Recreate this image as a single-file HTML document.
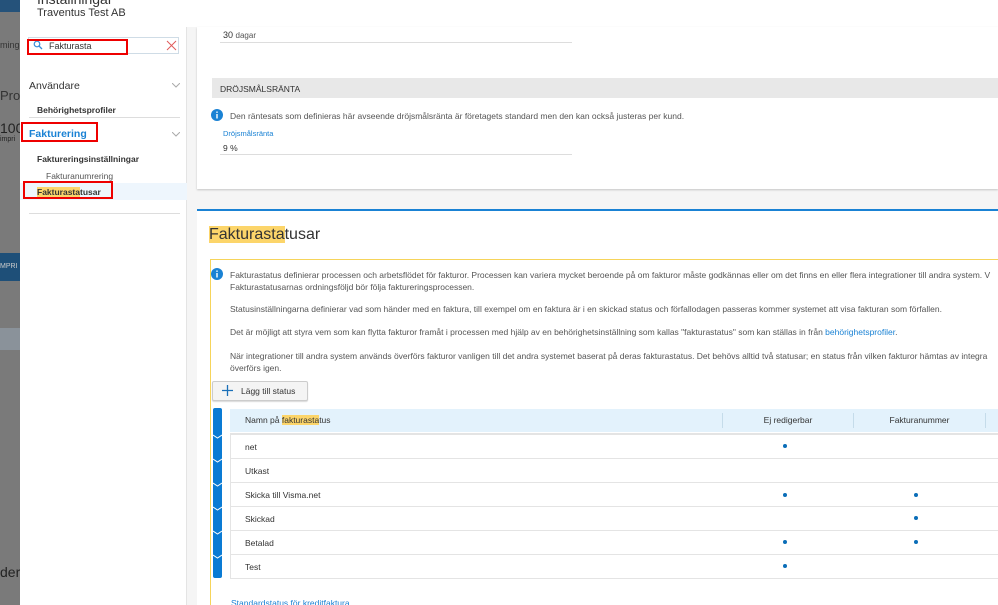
<!DOCTYPE html>
<html><head><meta charset="utf-8"><style>
*{box-sizing:border-box;margin:0;padding:0}
html{width:998px;height:605px;overflow:hidden}
body{width:998px;height:605px;overflow:hidden;position:relative;font-family:"Liberation Sans","DejaVu Sans",sans-serif;background:#f5f5f5;color:#333}
.abs{position:absolute}
.hl{background:#fcd56a}
.t9{font-size:8.5px;color:#555}
</style></head><body>
<div class="abs" style="left:0;top:0;width:21px;height:605px;background:#7a7a7a"></div>
<div class="abs" style="left:0;top:0;width:21px;height:12px;background:#25527a"></div>
<div class="abs" style="left:0;top:40px;font-size:9px;color:#333">minge</div>
<div class="abs" style="left:0;top:88px;font-size:13px;color:#333">Proje</div>
<div class="abs" style="left:0;top:120px;font-size:14px;color:#222">100</div>
<div class="abs" style="left:0;top:136px;font-size:7px;color:#222">impri</div>
<div class="abs" style="left:0;top:253px;width:21px;height:28px;background:#1e4f78;color:#ccc;font-size:7px;padding-top:10px">MPRI</div>
<div class="abs" style="left:0;top:328px;width:21px;height:22px;background:#8a929a"></div>
<div class="abs" style="left:0;top:564px;font-size:14px;color:#222">der</div>
<div class="abs" style="left:20px;top:0;width:978px;height:27px;background:#fff"></div>
<div class="abs" style="left:37px;top:-9px;font-size:14px;color:#333">Inställningar</div>
<div class="abs" style="left:37px;top:7px;font-size:11px;color:#333">Traventus Test AB</div>
<div class="abs" style="left:20px;top:27px;width:167px;height:578px;background:#fff;border-right:1px solid #e4e4e4"></div>
<div class="abs" style="left:28px;top:37px;width:151px;height:17px;border:1px solid #cfdce6"></div>
<svg class="abs" style="left:33px;top:40px" width="10" height="10"><circle cx="4" cy="4" r="2.8" stroke="#3a8ed8" fill="none" stroke-width="1.2"/><line x1="6" y1="6" x2="9" y2="9" stroke="#3a8ed8" stroke-width="1.3"/></svg>
<div class="abs" style="left:49px;top:41px;font-size:9px;color:#333">Fakturasta</div>
<svg class="abs" style="left:166px;top:40px" width="11" height="11"><path d="M1 1L10 10M10 1L1 10" stroke="#e05a5a" stroke-width="1"/></svg>
<div class="abs" style="left:27px;top:39px;width:101px;height:16px;border:2px solid #e00"></div>
<div class="abs" style="left:29px;top:80px;font-size:10.5px;color:#333">Användare</div>
<svg class="abs" style="left:172px;top:83px" width="8" height="5"><path d="M0 0L4 4L8 0" stroke="#aaa" fill="none"/></svg>
<div class="abs" style="left:37px;top:105px;font-size:8.5px;font-weight:bold;color:#333">Behörighetsprofiler</div>
<div class="abs" style="left:29px;top:117px;width:151px;height:1px;background:#ddd"></div>
<div class="abs" style="left:29px;top:128px;font-size:10.5px;font-weight:bold;color:#1a82d4">Fakturering</div>
<div class="abs" style="left:21px;top:122px;width:77px;height:20px;border:2px solid #e00"></div>
<svg class="abs" style="left:172px;top:132px" width="8" height="5"><path d="M0 0L4 4L8 0" stroke="#aaa" fill="none"/></svg>
<div class="abs" style="left:37px;top:154px;font-size:8.5px;font-weight:bold;color:#333">Faktureringsinställningar</div>
<div class="abs" style="left:46px;top:171px;font-size:8.5px;color:#555">Fakturanumrering</div>
<div class="abs" style="left:20px;top:183px;width:167px;height:17px;background:#eef6fd"></div>
<div class="abs" style="left:37px;top:187px;font-size:8.5px;font-weight:bold;color:#333"><span class="hl">Fakturasta</span>tusar</div>
<div class="abs" style="left:23px;top:181px;width:90px;height:18px;border:2px solid #e00"></div>
<div class="abs" style="left:29px;top:213px;width:151px;height:1px;background:#ddd"></div>
<div class="abs" style="left:197px;top:27px;width:801px;height:162px;background:#fff;box-shadow:0 1px 2px rgba(0,0,0,.2)"></div>
<div class="abs" style="left:223px;top:30px;font-size:9px;color:#333">30 <span style="font-size:8px;color:#555">dagar</span></div>
<div class="abs" style="left:220px;top:42px;width:352px;height:1px;background:#ddd"></div>
<div class="abs" style="left:212px;top:78px;width:786px;height:20px;background:#e8e8e8;font-size:8.5px;color:#333;padding:6px 0 0 8px">DRÖJSMÅLSRÄNTA</div>
<svg class="abs" style="left:211px;top:109px" width="12" height="12"><circle cx="6" cy="6" r="6" fill="#1a82d4"/><rect x="5.3" y="5" width="1.4" height="4.5" fill="#fff"/><rect x="5.3" y="2.5" width="1.4" height="1.4" fill="#fff"/></svg>
<div class="abs t9" style="left:230px;top:111px">Den räntesats som definieras här avseende dröjsmålsränta är företagets standard men den kan också justeras per kund.</div>
<div class="abs" style="left:223px;top:129px;font-size:7.5px;color:#1a82d4">Dröjsmålsränta</div>
<div class="abs" style="left:223px;top:143px;font-size:8.5px;color:#333">9 %</div>
<div class="abs" style="left:220px;top:154px;width:352px;height:1px;background:#ddd"></div>
<div class="abs" style="left:197px;top:209px;width:801px;height:396px;background:#fff;border-top:2px solid #1a82d4"></div>
<div class="abs" style="left:209px;top:226px;font-size:16px;color:#333"><span class="hl">Fakturasta</span>tusar</div>
<div class="abs" style="left:210px;top:259px;width:800px;height:360px;border:1px solid #f6d45a"></div>
<svg class="abs" style="left:211px;top:268px" width="12" height="12"><circle cx="6" cy="6" r="6" fill="#1a82d4"/><rect x="5.3" y="5" width="1.4" height="4.5" fill="#fff"/><rect x="5.3" y="2.5" width="1.4" height="1.4" fill="#fff"/></svg>
<div class="abs t9" style="left:230px;top:269px;white-space:nowrap;line-height:12px">Fakturastatus definierar processen och arbetsflödet för fakturor. Processen kan variera mycket beroende på om fakturor måste godkännas eller om det finns en eller flera integrationer till andra system. V<br>Fakturastatusarnas ordningsföljd bör följa faktureringsprocessen.</div>
<div class="abs t9" style="left:230px;top:304px;white-space:nowrap">Statusinställningarna definierar vad som händer med en faktura, till exempel om en faktura är i en skickad status och förfallodagen passeras kommer systemet att visa fakturan som förfallen.</div>
<div class="abs t9" style="left:230px;top:327px;white-space:nowrap">Det är möjligt att styra vem som kan flytta fakturor framåt i processen med hjälp av en behörighetsinställning som kallas "fakturastatus" som kan ställas in från <span style="color:#1a82d4">behörighetsprofiler</span>.</div>
<div class="abs t9" style="left:230px;top:350px;white-space:nowrap;line-height:12px">När integrationer till andra system används överförs fakturor vanligen till det andra systemet baserat på deras fakturastatus. Det behövs alltid två statusar; en status från vilken fakturor hämtas av integra<br>överförs igen.</div>
<div class="abs" style="left:212px;top:381px;width:96px;height:20px;background:#f4f4f4;border:1px solid #ccc;border-radius:2px;box-shadow:0 1px 1px rgba(0,0,0,.15)"></div>
<svg class="abs" style="left:222px;top:385px" width="11" height="11"><path d="M5.5 0V11M0 5.5H11" stroke="#1a6fb8" stroke-width="1.3"/></svg>
<div class="abs" style="left:241px;top:386px;font-size:8.5px;color:#333">Lägg till status</div>
<div class="abs" style="left:213px;top:408px;width:9px;height:170px;background:#0a7bd4;border-radius:2px"></div>
<svg class="abs" style="left:213px;top:430px" width="9" height="130"><g stroke="#fff" fill="none" stroke-width="1"><path d="M0 5L4.5 8L9 5"/><path d="M0 29L4.5 32L9 29"/><path d="M0 53L4.5 56L9 53"/><path d="M0 77L4.5 80L9 77"/><path d="M0 101L4.5 104L9 101"/><path d="M0 125L4.5 128L9 125"/></g></svg>
<div class="abs" style="left:230px;top:409px;width:768px;height:23px;background:#e3f2fc"></div>
<div class="abs" style="left:722px;top:413px;width:1px;height:15px;background:#c5dcea"></div>
<div class="abs" style="left:853px;top:413px;width:1px;height:15px;background:#c5dcea"></div>
<div class="abs" style="left:985px;top:413px;width:1px;height:15px;background:#c5dcea"></div>
<div class="abs" style="left:245px;top:415px;font-size:8.5px;color:#333">Namn på <span class="hl">fakturasta</span>tus</div>
<div class="abs" style="left:723px;top:415px;width:130px;text-align:center;font-size:8.5px;color:#333">Ej redigerbar</div>
<div class="abs" style="left:854px;top:415px;width:131px;text-align:center;font-size:8.5px;color:#333">Fakturanummer</div>
<div class="abs" style="left:230px;top:433px;width:768px;height:146px;border-left:1px solid #e4e4e4;background:#fff"></div>
<div class="abs" style="left:230px;top:433px;width:768px;height:2px;background:#e4e4e4"></div>
<div class="abs" style="left:230px;top:458px;width:768px;height:1px;background:#e4e4e4"></div>
<div class="abs" style="left:230px;top:482px;width:768px;height:1px;background:#e4e4e4"></div>
<div class="abs" style="left:230px;top:506px;width:768px;height:1px;background:#e4e4e4"></div>
<div class="abs" style="left:230px;top:530px;width:768px;height:1px;background:#e4e4e4"></div>
<div class="abs" style="left:230px;top:554px;width:768px;height:1px;background:#e4e4e4"></div>
<div class="abs" style="left:230px;top:578px;width:768px;height:1px;background:#e4e4e4"></div>
<div class="abs" style="left:245px;top:442px;font-size:8.5px;color:#333">net</div>
<div class="abs" style="left:245px;top:466px;font-size:8.5px;color:#333">Utkast</div>
<div class="abs" style="left:245px;top:490px;font-size:8.5px;color:#333">Skicka till Visma.net</div>
<div class="abs" style="left:245px;top:514px;font-size:8.5px;color:#333">Skickad</div>
<div class="abs" style="left:245px;top:538px;font-size:8.5px;color:#333">Betalad</div>
<div class="abs" style="left:245px;top:562px;font-size:8.5px;color:#333">Test</div>
<svg class="abs" style="left:0;top:0" width="998" height="605"><g fill="#0a6db8"><circle cx="785" cy="446" r="2"/><circle cx="785" cy="495" r="2"/><circle cx="916" cy="495" r="2"/><circle cx="916" cy="518" r="2"/><circle cx="785" cy="542" r="2"/><circle cx="916" cy="542" r="2"/><circle cx="785" cy="566" r="2"/></g></svg>
<div class="abs" style="left:231px;top:598px;font-size:8.5px;color:#1a82d4">Standardstatus för kreditfaktura</div>
</body></html>
